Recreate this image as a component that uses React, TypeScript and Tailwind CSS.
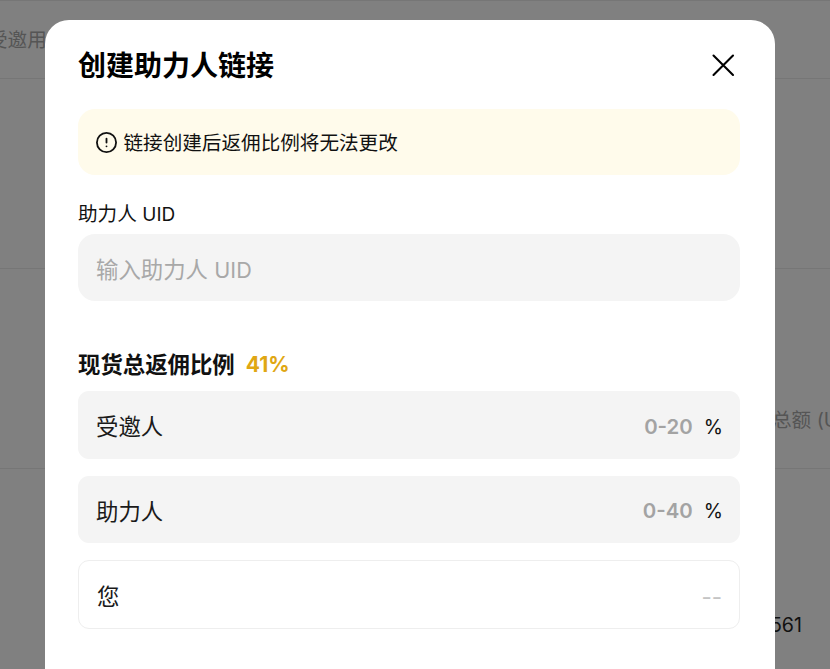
import { CircleAlert } from 'lucide-react';

const font = "font-['Inter','Noto_Sans_CJK_SC',sans-serif]";

function RatioRow({ label, range }: { label: string; range: string }) {
  return (
    <div className="flex h-[67.5px] items-center justify-between rounded-[11px] bg-[#f4f4f4] pl-[18px] pr-[17px] pt-[5px] text-[22.4px]">
      <span className="text-[#1a1a1a]">{label}</span>
      <span className="flex items-center gap-[11px]">
        <span className="text-[20.4px] font-semibold text-[#a3a3a3]">{range}</span>
        <span className="text-[19.6px] text-[#111]">%</span>
      </span>
    </div>
  );
}

function CloseIcon() {
  return (
    <svg width="24" height="24" viewBox="0 0 24 24" fill="none" stroke="#000" strokeWidth="2.1" strokeLinecap="round">
      <path d="M2.5 2.5 L22 22 M22 2.5 L2.5 22" />
    </svg>
  );
}

export default function App() {
  return (
    <div className={`${font} relative h-screen overflow-hidden whitespace-nowrap bg-[#808080] text-[19.6px]`}>
      <div className="flex h-[79px] items-center border-y border-[#767676] pt-[2px] text-[#555]">
        <span className="ml-[-12px]">受邀用户</span>
      </div>
      <div className="h-[190px] border-b border-[#767676]" />
      <div className="flex h-[200px] items-end border-b border-[#767676] pb-[33px] pl-[772px] text-[#555]">
        总额 (USDT)
      </div>
      <div className="pl-[750px] pt-[142px] text-[#111]">12561</div>

      <div className="absolute left-[45px] top-[20px] bottom-[-24px] w-[730px] rounded-t-[24px] bg-white pl-[33px] pr-[35px] text-[#111]">
        <div className="flex h-[89px] items-center justify-between pt-[3px]">
          <h2 className="text-[28px] font-bold leading-none text-black">创建助力人链接</h2>
          <span className="mb-[3px] mr-[5px]">
            <CloseIcon />
          </span>
        </div>

        <div className="flex h-[66px] items-center gap-[5.5px] rounded-[17px] bg-[#fffbeb] pl-[17px] pt-[1px]">
          <CircleAlert size={23} strokeWidth={1.9} />
          <span className="pt-[2px]">链接创建后返佣比例将无法更改</span>
        </div>

        <div className="mt-[25px] leading-[28px] text-[#111]">
          助力人 <span className="text-[19px]">UID</span>
        </div>
        <div className="mt-[5px] flex h-[67px] items-center rounded-[17px] bg-[#f4f4f4] px-[18px] pt-[5px] text-[22.4px] text-[#a8a8a8]">
          <span>
            输入助力人 <span className="text-[21.6px]">UID</span>
          </span>
        </div>

        <div className="mt-[47px] flex items-center gap-[11px] text-[22.4px] font-bold leading-[34px]">
          <span className="text-[#111]">现货总返佣比例</span>
          <span className="text-[21px] text-[#e0a713]">41%</span>
        </div>

        <div className="mt-[9px] flex flex-col gap-[17px]">
          <RatioRow label="受邀人" range="0-20" />
          <RatioRow label="助力人" range="0-40" />
          <div className="flex h-[69px] items-center justify-between rounded-[11px] border border-[#eeeeee] pl-[18px] pr-[17px] pt-[5px] text-[22.4px]">
            <span className="text-[#1a1a1a]">您</span>
            <span className="text-[#c4c4c4]">--</span>
          </div>
        </div>
      </div>
    </div>
  );
}
